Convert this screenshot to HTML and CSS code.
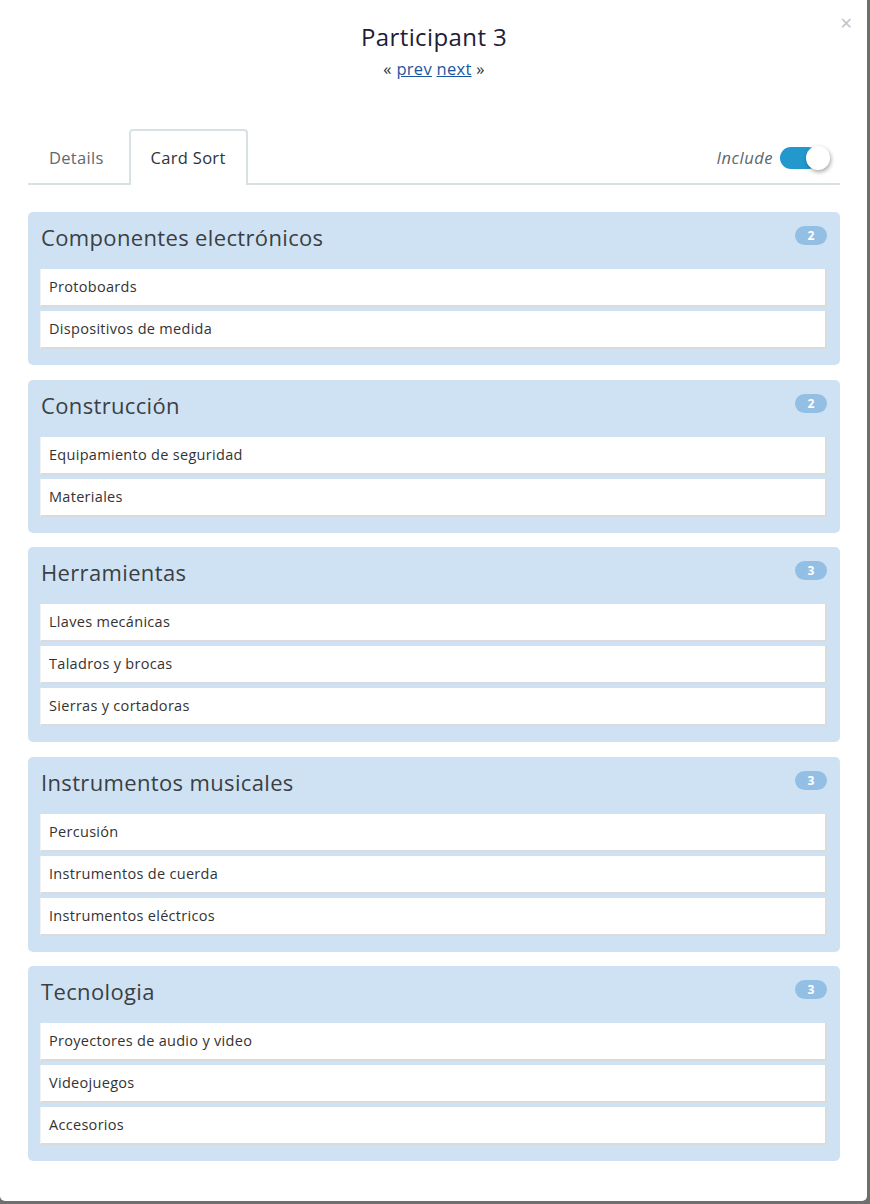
FILE: index.html
```html
<!DOCTYPE html>
<html>
<head>
<meta charset="utf-8">
<link rel="stylesheet" href="styles.css">
</head>
<body>
<div class="modal">
  <button class="close" aria-label="Close">&#x2715;</button>
  <header class="modal-head">
    <h1 class="title">Participant 3</h1>
    <div class="pager">&laquo; <a href="#">prev</a> <a href="#">next</a> &raquo;</div>
  </header>
  <div class="tabbar">
    <div class="tabs">
      <div class="tab">Details</div>
      <div class="tab active">Card Sort</div>
    </div>
    <div class="include">
      <span class="include-label">Include</span>
      <span class="toggle"><span class="knob"></span></span>
    </div>
  </div>
  <div class="groups">
    <section class="group">
      <div class="group-head"><h2>Componentes electrónicos</h2><span class="badge">2</span></div>
      <div class="card">Protoboards</div>
      <div class="card">Dispositivos de medida</div>
    </section>
    <section class="group">
      <div class="group-head"><h2>Construcción</h2><span class="badge">2</span></div>
      <div class="card">Equipamiento de seguridad</div>
      <div class="card">Materiales</div>
    </section>
    <section class="group">
      <div class="group-head"><h2>Herramientas</h2><span class="badge">3</span></div>
      <div class="card">Llaves mecánicas</div>
      <div class="card">Taladros y brocas</div>
      <div class="card">Sierras y cortadoras</div>
    </section>
    <section class="group">
      <div class="group-head"><h2>Instrumentos musicales</h2><span class="badge">3</span></div>
      <div class="card">Percusión</div>
      <div class="card">Instrumentos de cuerda</div>
      <div class="card">Instrumentos eléctricos</div>
    </section>
    <section class="group">
      <div class="group-head"><h2>Tecnologia</h2><span class="badge">3</span></div>
      <div class="card">Proyectores de audio y video</div>
      <div class="card">Videojuegos</div>
      <div class="card">Accesorios</div>
    </section>
  </div>
</div>
</body>
</html>
```

FILE: styles.css
```css
* { box-sizing: border-box; }
html, body { margin: 0; padding: 0; }
body {
  background: #6f6f6f;
  font-family: "Open Sans", "Liberation Sans", sans-serif;
  width: 870px;
  height: 1204px;
  overflow: hidden;
}
.modal {
  position: relative;
  width: 867px;
  height: 1201px;
  background: #fff;
  border-radius: 0 0 5px 5px;
  padding: 0 27px 0 28px;
}
.close {
  position: absolute;
  top: 14px;
  right: 14px;
  border: 0;
  background: none;
  color: #c4c4c4;
  font-size: 16px;
  font-weight: bold;
  padding: 0;
  cursor: pointer;
  font-family: "DejaVu Sans", sans-serif;
}
.modal-head {
  text-align: center;
  padding-top: 21px;
}
.title {
  margin: 0;
  font-size: 24px;
  letter-spacing: 0.4px;
  font-weight: 400;
  color: #1d2038;
  line-height: 32px;
}
.pager {
  margin-top: 4px;
  font-size: 16.5px;
  letter-spacing: 0.3px;
  color: #333;
  line-height: 24px;
}
.pager a { color: #1a56a0; text-decoration: underline; }
.tabbar {
  margin-top: 49px;
  display: flex;
  justify-content: space-between;
  align-items: flex-end;
  border-bottom: 2px solid #d8e2e5;
  height: 55px;
}
.tabs { display: flex; align-items: flex-end; height: 100%; }
.tab {
  font-size: 16.5px;
  letter-spacing: 0.3px;
  color: #5d6a72;
  padding: 0 21px;
  height: 55px;
  line-height: 56px;
  margin-bottom: -2px;
}
.tab.active {
  margin-left: 4px;
  color: #2f3337;
  background: #fff;
  border: 2px solid #d8e2e5;
  border-bottom: 0;
  border-radius: 4px 4px 0 0;
  height: 56px;
  padding: 0 20px;
  line-height: 54px;
}
.include {
  display: flex;
  align-items: center;
  gap: 7px;
  height: 55px;
  padding-right: 21px;
  padding-top: 4px;
}
.include-label {
  font-style: italic;
  font-size: 16.5px;
  letter-spacing: 0.5px;
  color: #5a6670;
}
.toggle {
  position: relative;
  display: inline-block;
  width: 39px;
  height: 22px;
  background: #2298cd;
  border-radius: 11px;
}
.knob {
  position: absolute;
  right: -11px;
  top: -1px;
  width: 24px;
  height: 24px;
  border-radius: 50%;
  background: #fff;
  box-shadow: 1px 2px 4px rgba(0,0,0,0.35);
}
.groups {
  margin-top: 27px;
  display: flex;
  flex-direction: column;
  gap: 14.5px;
}
.group {
  background: #cfe2f3;
  border-radius: 5px;
  padding: 0 13px 16px 12px;
}
.group-head {
  height: 57px;
  display: flex;
  justify-content: space-between;
  align-items: flex-start;
}
.group-head h2 {
  margin: 0;
  font-size: 22px;
  letter-spacing: 0.35px;
  font-weight: 400;
  color: #3b3f44;
  line-height: 26px;
  padding-top: 12px;
  padding-left: 1px;
}
.badge {
  margin-top: 14px;
  width: 32px;
  height: 19px;
  border-radius: 10px;
  background: #94bfe5;
  color: #fff;
  font-size: 12px;
  font-weight: 700;
  text-align: center;
  line-height: 19px;
}
.card {
  background: #fff;
  height: 38px;
  border-right: 2px solid #dadbdc;
  border-bottom: 2px solid #dadbdc;
  border-left: 1px solid #eef3f7;
  font-size: 14.5px;
  letter-spacing: 0.3px;
  color: #333;
  padding-left: 8px;
  line-height: 36px;
}
.card + .card { margin-top: 4px; }
```
